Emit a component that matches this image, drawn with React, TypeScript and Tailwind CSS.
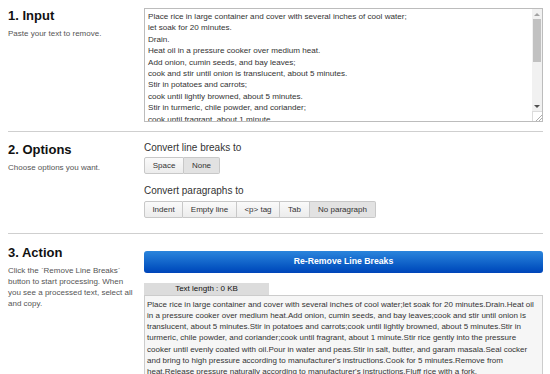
import React from 'react';

const INPUT_LINES = [
  'Place rice in large container and cover with several inches of cool water;',
  'let soak for 20 minutes.',
  'Drain.',
  'Heat oil in a pressure cooker over medium heat.',
  'Add onion, cumin seeds, and bay leaves;',
  'cook and stir until onion is translucent, about 5 minutes.',
  'Stir in potatoes and carrots;',
  'cook until lightly browned, about 5 minutes.',
  'Stir in turmeric, chile powder, and coriander;',
  'cook until fragrant, about 1 minute.',
];

const OUTPUT_LINES = [
  'Place rice in large container and cover with several inches of cool water;let soak for 20 minutes.Drain.Heat oil',
  'in a pressure cooker over medium heat.Add onion, cumin seeds, and bay leaves;cook and stir until onion is',
  'translucent, about 5 minutes.Stir in potatoes and carrots;cook until lightly browned, about 5 minutes.Stir in',
  'turmeric, chile powder, and coriander;cook until fragrant, about 1 minute.Stir rice gently into the pressure',
  'cooker until evenly coated with oil.Pour in water and peas.Stir in salt, butter, and garam masala.Seal cocker',
  "and bring to high pressure according to manufacturer's instructions.Cook for 5 minutes.Remove from",
  "heat.Release pressure naturally according to manufacturer's instructions.Fluff rice with a fork.",
];

const LINE_BREAK_OPTS = [
  { label: 'Space', w: 'w-[40px]' },
  { label: 'None', w: 'w-[36px]', active: true },
];

const PARA_OPTS = [
  { label: 'Indent', w: 'w-[39px]' },
  { label: 'Empty line', w: 'w-[54px]' },
  { label: '<p> tag', w: 'w-[43px]' },
  { label: 'Tab', w: 'w-[30px]' },
  { label: 'No paragraph', w: 'w-[66px]', active: true },
];

type Opt = { label: string; w: string; active?: boolean };

function ButtonGroup({ items }: { items: Opt[] }) {
  return (
    <div className="flex">
      {items.map((o, i) => (
        <div
          key={o.label}
          className={`${o.w} h-[17px] flex items-center justify-center text-[8px] text-[#333] border border-[#c8c8c8] ${
            i > 0 ? 'border-l-0' : 'rounded-l-[2px]'
          } ${i === items.length - 1 ? 'rounded-r-[2px]' : ''} ${
            o.active
              ? 'bg-[#e2e2e2]'
              : 'bg-gradient-to-b from-[#fafafa] to-[#ececec]'
          }`}
        >
          {o.label}
        </div>
      ))}
    </div>
  );
}

function SectionHead({ title, children }: { title: string; children: React.ReactNode }) {
  return (
    <div className="w-[136px] shrink-0">
      <h2 className="text-[13px] leading-[15px] font-bold text-[#111]">{title}</h2>
      <p className="mt-[5px] text-[8px] leading-[11px] text-[#555] pr-[9px]">{children}</p>
    </div>
  );
}

function FakeScrollbar() {
  return (
    <div className="w-[10px] shrink-0 bg-[#f1f1f1] flex flex-col items-center">
      <div className="h-[10px] flex items-center justify-center">
        <div className="w-0 h-0 border-x-[3px] border-x-transparent border-b-[3px] border-b-[#a3a3a3]" />
      </div>
      <div className="w-[8px] h-[43px] bg-[#c1c1c1]" />
      <div className="flex-1" />
      <div className="h-[10px] flex items-center justify-center">
        <div className="w-0 h-0 border-x-[3px] border-x-transparent border-t-[3px] border-t-[#505050]" />
      </div>
      <div className="w-[10px] h-[10px] bg-white border-l border-t border-[#dcdcdc] overflow-hidden">
        <svg width="10" height="10" viewBox="0 0 10 10" className="block">
          <line x1="3" y1="9" x2="9" y2="3" stroke="#999" strokeWidth="0.8" />
          <line x1="6" y1="9" x2="9" y2="6" stroke="#999" strokeWidth="0.8" />
        </svg>
      </div>
    </div>
  );
}

export default function App() {
  return (
    <div
      className="w-[550px] h-[374px] overflow-hidden bg-white pl-[8px] pr-[7px] pt-[8px]"
      style={{ fontFamily: '"Liberation Sans", Arial, sans-serif' }}
    >
      {/* 1. Input */}
      <section className="flex">
        <SectionHead title="1. Input">Paste your text to remove.</SectionHead>
        <div className="flex-1 h-[114px] border border-[#bcbcbc] flex bg-white">
          <div className="flex-1 overflow-hidden pl-[3px] pt-[2px] text-[8.1px] leading-[11.4px] text-[#333] whitespace-nowrap">
            {INPUT_LINES.map((l, i) => (
              <div key={i}>{l}</div>
            ))}
          </div>
          <FakeScrollbar />
        </div>
      </section>

      <div className="mt-[9px] h-px bg-[#cfcfcf]" />

      {/* 2. Options */}
      <section className="flex pt-[10px] pb-[15px]">
        <SectionHead title="2. Options">Choose options you want.</SectionHead>
        <div className="flex-1">
          <div className="text-[10px] leading-[12px] text-[#333]">Convert line breaks to</div>
          <div className="mt-[3px]">
            <ButtonGroup items={LINE_BREAK_OPTS} />
          </div>
          <div className="mt-[11px] text-[10px] leading-[12px] text-[#333]">Convert paragraphs to</div>
          <div className="mt-[4px]">
            <ButtonGroup items={PARA_OPTS} />
          </div>
        </div>
      </section>

      <div className="h-px bg-[#cfcfcf]" />

      {/* 3. Action */}
      <section className="flex pt-[11px]">
        <SectionHead title="3. Action">
          Click the `Remove Line Breaks` button to start processing. When you see a processed text, select all and copy.
        </SectionHead>
        <div className="flex-1 pt-[2px]">
          <button className="w-full h-[22px] rounded-[3px] bg-gradient-to-b from-[#2b85dc] to-[#0044b9] text-white text-[8.7px] font-bold">
            Re-Remove Line Breaks
          </button>
          <div className="mt-[10px] w-[125px] h-[12px] bg-[#dcdcdc] flex items-center justify-center text-[8px] text-[#111]">
            Text length : 0 KB
          </div>
          <div className="h-[100px] border border-[#cccccc] bg-[#f6f6f6] pl-[2px] pt-[3px] text-[8px] leading-[11.3px] text-[#333] whitespace-nowrap overflow-hidden">
            {OUTPUT_LINES.map((l, i) => (
              <div key={i}>{l}</div>
            ))}
          </div>
        </div>
      </section>
    </div>
  );
}
